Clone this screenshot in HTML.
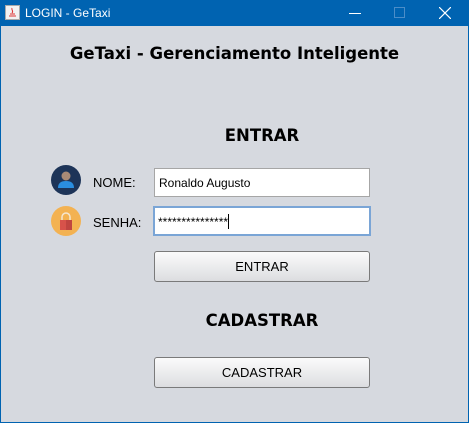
<!DOCTYPE html><html><head><style>
body{margin:0;width:469px;height:423px;overflow:hidden;font-family:"Liberation Sans",sans-serif;}
.win{position:absolute;left:0;top:0;width:467px;height:421px;border:1px solid #0063b1;background:#d6d9df;}
.tb{position:absolute;left:0;top:0;width:469px;height:26px;background:#0063b1;color:#fff;font-size:12px;}
.a{position:absolute;white-space:nowrap}
.h{font-weight:bold;color:#000;font-family:"DejaVu Sans",sans-serif;}
.tf{position:absolute;background:#fff;border:1px solid #a6a6a6;box-sizing:border-box;font-size:12px;padding:7px 0 0 4px;}
.btn{position:absolute;box-sizing:border-box;border:1px solid #7a7a7a;border-radius:3px;background:linear-gradient(#fbfbfb,#dcdde0);font-size:13px;text-align:center;}
.lbl{font-size:13px;color:#000}
</style></head><body>
<div class="win"></div>
<div class="tb">
<svg class="a" style="left:5px;top:5px" width="15" height="15"><rect x="0.5" y="0.5" width="14" height="14" fill="#f2f2f2" stroke="#aaa"/><path d="M4 11h7M5 9h5M7 3c-1 2 2 3 0 5" stroke="#d33" fill="none"/></svg>
<span class="a" style="left:25px;top:6px">LOGIN - GeTaxi</span>
<div class="a" style="left:349px;top:13px;width:12px;height:1px;background:#fff"></div>
<div class="a" style="left:394px;top:7px;width:9px;height:9px;border:1px solid #4b8dc8"></div>
<svg class="a" style="left:439px;top:7px" width="12" height="12"><path d="M0 0L12 12M12 0L0 12" stroke="#fff" stroke-width="1.2"/></svg>
</div>
<div class="a h" style="left:0;width:469px;text-align:center;top:44px;font-size:16.5px">GeTaxi - Gerenciamento Inteligente</div>
<div class="a h" style="left:162px;width:200px;text-align:center;top:126px;font-size:16.5px">ENTRAR</div>
<div class="a h" style="left:162px;width:200px;text-align:center;top:311px;font-size:16.5px">CADASTRAR</div>
<svg class="a" style="left:51px;top:165px" width="30" height="30"><circle cx="15" cy="15" r="15" fill="#1d3458"/><circle cx="15" cy="11" r="4.5" fill="#a88a76"/><path d="M7 23c0-5 3-7 8-7s8 2 8 7z" fill="#2a8ee0"/></svg>
<svg class="a" style="left:51px;top:206px" width="30" height="30"><circle cx="15" cy="15" r="15" fill="#f3b252"/><path d="M11 14v-3a4 4 0 0 1 8 0v3" stroke="#f5e6d0" stroke-width="1.5" fill="none"/><rect x="9" y="14" width="12" height="10" fill="#d7524a"/><rect x="15" y="14" width="6" height="10" fill="#c04540"/></svg>
<span class="a lbl" style="left:93px;top:175px">NOME:</span>
<span class="a lbl" style="left:93px;top:215px">SENHA:</span>
<div class="tf" style="left:154px;top:168px;width:216px;height:29px">Ronaldo Augusto</div>
<div class="tf" style="left:153px;top:206px;width:218px;height:30px;border:2px solid #7aa5d6;padding-top:6px;padding-left:3px">***************<span style="display:inline-block;width:1px;height:15px;background:#000;vertical-align:-3px"></span></div>
<div class="btn" style="left:154px;top:251px;width:216px;height:31px;line-height:29px">ENTRAR</div>
<div class="btn" style="left:154px;top:357px;width:216px;height:31px;line-height:29px">CADASTRAR</div>
</body></html>
